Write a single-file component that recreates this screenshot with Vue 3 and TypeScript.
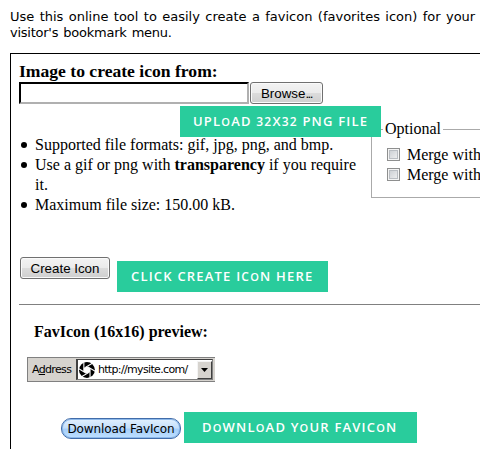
<script setup lang="ts">
import { ref } from 'vue'

const address = ref<string>('http://mysite.com/')
const options: string[] = ['Merge with', 'Merge with']
const blades: number[] = [0, 60, 120, 180, 240, 300]
</script>

<template>
  <main class="page">
    <p class="intro">Use this online tool to easily create a favicon (favorites icon) for your<br /><span class="second">visitor's bookmark menu.</span></p>
    <section class="tool">
      <h1 class="title"><span>Image to create icon from:</span></h1>
      <div class="upload">
        <div class="file"></div>
        <button class="btn browse"><span>Browse<i class="dots">...</i></span></button>
        <div class="callout upload-note"><span>UPL<small>O</small>AD <small class="num">32</small>X<small class="num">32</small> PNG FILE</span></div>
      </div>
      <div class="details">
        <ul class="facts">
          <li>Supported file formats: gif, jpg, png, and bmp.</li>
          <li>Use a gif or png with <b>transparency</b> if you require<br />it.</li>
          <li>Maximum file size: 150.00 kB.</li>
        </ul>
        <fieldset class="optional">
          <legend>Optional</legend>
          <label v-for="(option, i) in options" :key="i"><span class="check"></span>{{ option }}</label>
        </fieldset>
      </div>
      <div class="create-row">
        <button class="btn create"><span>Create Icon</span></button>
        <div class="callout create-note"><span>CLICK CREATE I<small class="num">C</small><small>O</small>N HERE</span></div>
      </div>
      <div class="rule"></div>
      <h2 class="preview"><span>FavIcon (16x16) preview:</span></h2>
      <div class="bar">
        <span class="label">A<u>d</u>dress</span>
        <div class="field">
          <svg class="shutter" viewBox="0 0 16 16" width="16" height="16">
            <circle cx="8" cy="8" r="8" fill="#000" />
            <polygon points="8,4.4 11.1,6.2 11.1,9.8 8,11.6 4.9,9.8 4.9,6.2" fill="#fff" />
            <path v-for="a in blades" :key="a" d="M5.5 5.85 L14 0.94" :transform="`rotate(${a} 8 8)`" fill="none" stroke="#fff" stroke-width="1.1" />
          </svg>
          <span class="url">{{ address }}</span>
          <span class="drop"><svg width="8" height="4" viewBox="0 0 8 4"><path d="M0 0H7L3.5 4Z" /></svg></span>
        </div>
      </div>
      <div class="download-row">
        <button class="download"><span>Download FavIcon</span></button>
        <div class="callout download-note"><span>D<small>O</small>WNL<small>O</small>AD Y<small>O</small>UR FAVIC<small>O</small>N</span></div>
      </div>
    </section>
  </main>
</template>

<style>
body {
  overflow: hidden;
  background: #fff;
}
</style>

<style scoped>
.page {
  box-sizing: border-box;
  width: 480px;
  height: 449px;
  padding: 9px 0 0 10px;
  overflow: hidden;
  color: #000;
  font-family: "Liberation Serif", serif;
  white-space: nowrap;
}
.intro {
  height: 44px;
  margin: 0;
  font: 13px/16px "DejaVu Sans", sans-serif;
  word-spacing: 1.25px;
}
.second {
  letter-spacing: -0.25px;
}
.tool {
  width: 500px;
  height: 420px;
  box-sizing: border-box;
  padding: 9px 0 0 8px;
  border: 1px solid #000;
}
.title {
  height: 19px;
  margin: 0;
  font-size: 17.6px;
  line-height: 17px;
}
.upload {
  position: relative;
  display: flex;
  gap: 1px;
  height: 22px;
}
.file {
  box-sizing: border-box;
  width: 230px;
  height: 22px;
  border: 2px solid #b0b0b0;
  border-top-color: #000;
  border-left-color: #000;
}
.btn {
  box-sizing: border-box;
  height: 22px;
  padding: 0;
  border: 1px solid #707070;
  border-radius: 3px;
  background: linear-gradient(#f3f3f3, #ebebeb 48%, #dcdcdc 50%, #cfcfcf);
  box-shadow: inset 0 0 0 1px #fafafa;
  color: #000;
  font: 13.33px/19px "Liberation Sans", sans-serif;
}
.browse {
  width: 73px;
}
.dots {
  font-style: normal;
  letter-spacing: -1.5px;
}
.callout {
  box-sizing: border-box;
  height: 31px;
  background: #29cc9c;
  color: #fff;
  font: 600 13px/30px "Open Sans", sans-serif;
  letter-spacing: 1.2px;
}
.callout small {
  font-size: 11px;
}
.callout .num {
  font-size: 12px;
}
.upload-note {
  position: absolute;
  top: 24px;
  left: 161px;
  width: 201px;
  padding-left: 13px;
  z-index: 1;
}
.details {
  display: flex;
  height: 153px;
}
.facts {
  flex: none;
  width: 352px;
  box-sizing: border-box;
  margin: 0;
  padding: 31px 0 0 16px;
  list-style: none;
  font-size: 16px;
  line-height: 20px;
}
.facts li::before {
  content: "";
  float: left;
  width: 6px;
  height: 6px;
  margin: 7px 0 0 -14px;
  border-radius: 50%;
  background: #000;
}
.optional {
  flex: none;
  box-sizing: border-box;
  width: 180px;
  height: 79px;
  margin: 15px 0 0;
  padding: 6px 0 0 15px;
  border: 1px solid #aaa;
  font-size: 16px;
}
.optional legend {
  margin-left: -4px;
  padding: 0 2px;
  line-height: 20px;
}
.optional label {
  display: flex;
  align-items: center;
  height: 20px;
}
.check {
  box-sizing: border-box;
  width: 13px;
  height: 13px;
  margin: -2px 7px 0 0;
  border: 1px solid #8e8f8f;
  background: linear-gradient(135deg, #c5c9ce, #f4f4f4);
  box-shadow: inset 0 0 0 1px #f4f4f4, inset 0 0 0 2px #b9bdc2;
}
.create-row {
  display: flex;
  gap: 7px;
  height: 47px;
  padding-left: 1px;
}
.create {
  width: 90px;
}
.create-note {
  width: 211px;
  margin-top: 4px;
  padding-left: 14px;
}
.rule {
  height: 1px;
  background: #808080;
}
.preview {
  height: 52px;
  box-sizing: border-box;
  margin: 0;
  padding: 17px 0 0 15px;
  font-size: 16px;
  line-height: 20px;
}
.bar {
  display: flex;
  box-sizing: border-box;
  width: 188px;
  height: 25px;
  margin-left: 8px;
  padding: 1px 1px 1px 4px;
  border: 1px solid #808080;
  border-right: 0;
  background: #d6d3ce;
  font: 11px/23px "DejaVu Sans", sans-serif;
}
.label {
  width: 44px;
  line-height: 22px;
  letter-spacing: -0.65px;
}
.field {
  display: flex;
  align-items: center;
  box-sizing: border-box;
  width: 137px;
  height: 21px;
  padding-left: 1px;
  border: 1px solid #808080;
  border-top-color: #404040;
  border-left: 2px solid #404040;
  background: #fff;
}
.url {
  width: 100px;
  margin-left: 3px;
  letter-spacing: -0.65px;
}
.drop {
  display: grid;
  place-items: center;
  box-sizing: border-box;
  width: 15px;
  height: 18px;
  border: 1px solid #f4f4f4;
  border-right-color: #404040;
  border-bottom-color: #404040;
  background: #d6d3ce;
}
.download-row {
  display: flex;
  gap: 3px;
  padding: 30px 0 0 42px;
}
.download {
  box-sizing: border-box;
  width: 120px;
  height: 21px;
  margin-top: 6px;
  padding: 0;
  border: 1px solid #416ca9;
  border-radius: 10px;
  background: linear-gradient(#e2f0fe, #c6e0fb 45%, #a6cffa 55%, #bfe0ff);
  box-shadow: inset 0 0 0 1px #8db9ea;
  color: #000;
  font: 12px/18px "DejaVu Sans", sans-serif;
  letter-spacing: -0.1px;
}
.download-note {
  width: 233px;
  padding-left: 18px;
}
</style>
